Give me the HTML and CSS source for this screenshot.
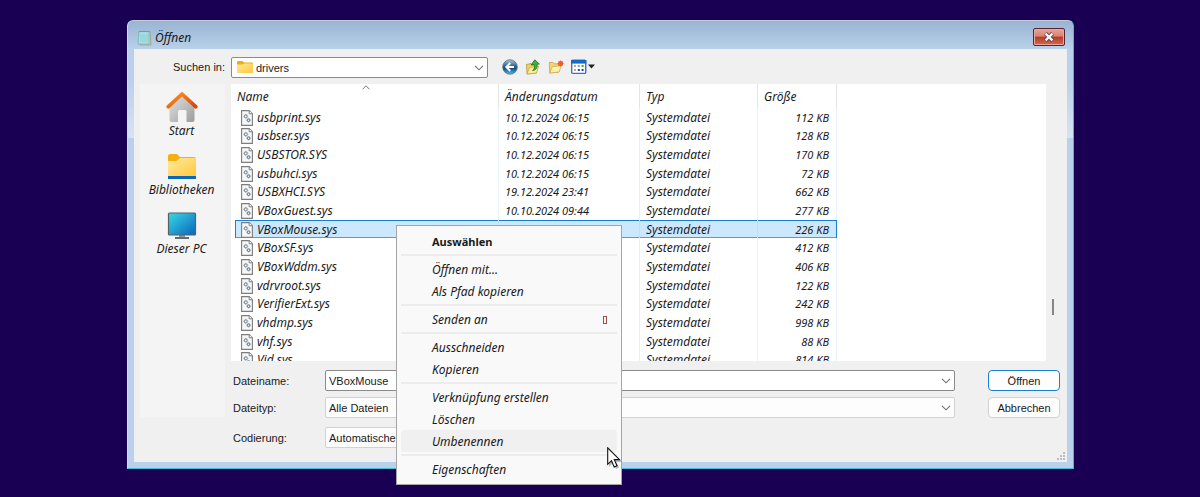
FILE: index.html
```
<!DOCTYPE html>
<html lang="de">
<head>
	<meta charset="utf-8">
	<title>Öffnen</title>
	<link rel="stylesheet" href="styles.css">
</head>
<body>

<!-- shared icons -->
<svg class="defs" width="0" height="0" aria-hidden="true">
	<defs>
		<linearGradient id="yellow" x1="0" y1="0" x2="1" y2="1">
			<stop offset="0" stop-color="#ffe9a0"/><stop offset="1" stop-color="#ffc93c"/>
		</linearGradient>
		<linearGradient id="roof" x1="0" y1="0" x2="1" y2="1">
			<stop offset="0" stop-color="#ff9a1a"/><stop offset="1" stop-color="#d8400e"/>
		</linearGradient>
		<linearGradient id="wall" x1="0" y1="0" x2="1" y2="1">
			<stop offset="0" stop-color="#e4e4e4"/><stop offset="1" stop-color="#9c9c9c"/>
		</linearGradient>
		<linearGradient id="screen" x1="0" y1="0" x2="1" y2="1">
			<stop offset="0" stop-color="#36dbe4"/><stop offset="1" stop-color="#0d63bd"/>
		</linearGradient>
		<linearGradient id="ball" x1="0" y1="0" x2="0" y2="1">
			<stop offset="0" stop-color="#b3c7d6"/><stop offset="0.45" stop-color="#2b628f"/><stop offset="0.6" stop-color="#1c4f7d"/><stop offset="1" stop-color="#45c6ef"/>
		</linearGradient>
		<symbol id="sys" viewBox="0 0 12 16">
			<path d="M.6.6h7.600l3.200 3.200v11.600H.6z" fill="#f8f8f8" stroke="#7d7d7d" stroke-width="1.1"/>
			<path d="M8.2.8v3h3" fill="#fff" stroke="#7d7d7d"/>
			<circle cx="4.8" cy="6.3" r="1.5" fill="none" stroke="#8a98a6" stroke-width="1.2"/>
			<circle cx="7.6" cy="10.2" r="1.3" fill="none" stroke="#7c8997" stroke-width="1.2"/>
			<path d="M4.800 3.800v1.200M4.800 7.600v1.200M2.300 6.300h1.200M6.100 6.300h1.200M7.600 7.900v1M7.600 11.500v1M5.300 10.200h1M8.900 10.200h1" stroke="#9aa5b0"/>
		</symbol>
		<symbol id="down" viewBox="0 0 10 6">
			<path d="M1 .8 5 4.8 9 .8" fill="none" stroke="#707070" stroke-width="1.1"/>
		</symbol>
	</defs>
</svg>

<main class="dialog">
	<header class="titlebar">
		<svg class="notepad" width="15" height="16" viewBox="0 0 15 16">
			<path d="M2 1.5h11l1 13.5H3z" fill="#d9cfa6" stroke="#8f8c75" stroke-width=".6"/>
			<path d="M2 1.5h10v12.6L1 14z" fill="#a5e0e6" stroke="#66a9b5" stroke-width=".6"/>
			<path d="M3 5h8M3 7h8M3 9h8M3 11h8" stroke="#78bfca" stroke-width=".5"/>
			<path d="M2.5 1.6h10" stroke="#5f7f8d" stroke-dasharray="1 1"/>
		</svg>
		<h1>Öffnen</h1>
		<button class="close" type="button" aria-label="Schließen">
			<svg width="12" height="10" viewBox="0 0 12 10"><path d="M2.5 1.5 9.5 8.5M9.5 1.5 2.5 8.5" stroke="#5d4350" stroke-width="4"/><path d="M2.6 1.6 9.4 8.4M9.4 1.6 2.6 8.4" stroke="#f4f4f4" stroke-width="2.3"/></svg>
		</button>
	</header>

	<form class="client">
		<label class="lookin-label" for="lookin">Suchen in:</label>
		<div class="lookin-row">
			<div class="combo lookin">
				<svg class="folder" width="16" height="14" viewBox="0 0 16 14">
					<path d="M0 2Q0 1 1 1h4.5L7 2.5h8q1 0 1 1V8H0z" fill="#f2ac0c"/>
					<path d="M0 4.6h5.6L7 3.5h9v8.7q0 .8-.8.8H.8Q0 13 0 12.2z" fill="url(#yellow)"/>
				</svg>
				<select id="lookin"><option>drivers</option></select>
				<svg class="arrow" width="10" height="6"><use href="#down"/></svg>
			</div>
			<div class="tools">
				<button type="button" aria-label="Zurück">
					<svg width="16" height="16" viewBox="0 0 16 16"><circle cx="8" cy="8" r="7.3" fill="url(#ball)" stroke="#456783" stroke-width=".7"/><path d="M8.3 4 4.3 8l4 4M4.6 8H12" fill="none" stroke="#fff" stroke-width="1.9"/></svg>
				</button>
				<button type="button" aria-label="Übergeordneter Ordner">
					<svg width="16" height="16" viewBox="0 0 16 16"><path d="M1.5 5.5 6 4.5l1 1.2h4.5V14L2 15z" fill="#f0d067" stroke="#b28d25" stroke-width=".7"/><path d="m2 15 2.5-6.5 9-1.5L11.5 14z" fill="#ffec9c" stroke="#c2a03a" stroke-width=".7"/><path d="M7.500 11.500c2-1 2.300-3 1.700-6L6 6l3.800-5.200L14.300 5l-2.200.3c.3 3.500-.8 5.700-4.600 6.200z" fill="#3ab53a" stroke="#16701d" stroke-width=".8"/></svg>
				</button>
				<button type="button" aria-label="Neuer Ordner">
					<svg width="16" height="16" viewBox="0 0 16 16"><path d="M1.3 3.5h4l1.200 1.300H11V13L1.700 14z" fill="#f3d574" stroke="#c09b36" stroke-width=".7"/><path d="m1.700 14 2.500-6.300 9.300-1L11 13z" fill="#ffefac" stroke="#c7a747" stroke-width=".7"/><circle cx="12.600" cy="4.500" r="2.100" fill="#f79a52" stroke="#e8542c"/><path d="M12.600 1.500v6M9.600 4.500h6M10.500 2.400l4.200 4.200M14.700 2.400l-4.200 4.200" stroke="#e8542c" stroke-width=".8"/></svg>
				</button>
				<button type="button" class="views" aria-label="Ansicht">
					<svg width="24" height="16" viewBox="0 0 24 16"><rect x=".7" y="1.2" width="14" height="13.2" rx="1" fill="#fff" stroke="#2e78ca" stroke-width="1.4"/><path d="M0 1h15.4v3.600H0z" fill="#1769c6"/><path d="M3 6h2v2H3zM3 10h2v2H3z" fill="#df9a78"/><path d="M6.800 6h2v2h-2z" fill="#68a4ed"/><path d="M6.800 10h2v2h-2zM10.600 10h2v2h-2z" fill="#214aa6"/><path d="M10.600 6h2v2h-2z" fill="#48a046"/><path d="M17 5.500h7L20.500 9.500z" fill="#222"/></svg>
				</button>
			</div>
		</div>

		<nav class="places">
			<a href="#start">
				<svg width="32" height="32" viewBox="0 0 32 32"><path d="M3.500 15 16 3.500 28.500 15v14q0 2-2 2H20.500V20.500q0-1.500-1.500-1.500h-5.500q-1.500 0-1.500 1.500V31H5.500q-2 0-2-2z" fill="url(#wall)"/><path d="M2.300 15.700 16 3 29.700 15.700" fill="none" stroke="url(#roof)" stroke-width="3.700" stroke-linecap="round" stroke-linejoin="round"/></svg>
				Start
			</a>
			<a href="#bibliotheken">
				<svg width="32" height="32" viewBox="0 0 32 32"><path d="M2 6q0-2 2-2h7l3 3h14q2 0 2 2v7H2z" fill="#f5b010"/><path d="M2 11h8.500L14 8h16v19H2z" fill="url(#yellow)"/><path d="M2 26h28v3H2z" fill="#0b67b7"/></svg>
				Bibliotheken
			</a>
			<a href="#pc">
				<svg width="32" height="32" viewBox="0 0 32 32"><path d="M13 26h6v4h-6z" fill="#8e9499"/><path d="M9 28h14v2H9z" fill="#636b71"/><rect x="2.500" y="4" width="27" height="22" rx="1" fill="url(#screen)" stroke="#596168" stroke-width="1.200"/></svg>
				Dieser PC
			</a>
		</nav>

		<div class="list">
			<svg class="sort" width="8" height="5" viewBox="0 0 8 5"><path d="M.5 4.3 4 .8l3.500 3.500" fill="none" stroke="#777"/></svg>
			<table>
				<thead>
					<tr><th class="name">Name</th><th class="date">Änderungsdatum</th><th class="type">Typ</th><th class="size">Größe</th></tr>
				</thead>
				<tbody>
					<tr><td><svg width="12" height="16"><use href="#sys"/></svg>usbprint.sys</td><td>10.12.2024 06:15</td><td>Systemdatei</td><td>112 KB</td></tr>
					<tr><td><svg width="12" height="16"><use href="#sys"/></svg>usbser.sys</td><td>10.12.2024 06:15</td><td>Systemdatei</td><td>128 KB</td></tr>
					<tr><td><svg width="12" height="16"><use href="#sys"/></svg>USBSTOR.SYS</td><td>10.12.2024 06:15</td><td>Systemdatei</td><td>170 KB</td></tr>
					<tr><td><svg width="12" height="16"><use href="#sys"/></svg>usbuhci.sys</td><td>10.12.2024 06:15</td><td>Systemdatei</td><td>72 KB</td></tr>
					<tr><td><svg width="12" height="16"><use href="#sys"/></svg>USBXHCI.SYS</td><td>19.12.2024 23:41</td><td>Systemdatei</td><td>662 KB</td></tr>
					<tr><td><svg width="12" height="16"><use href="#sys"/></svg>VBoxGuest.sys</td><td>10.10.2024 09:44</td><td>Systemdatei</td><td>277 KB</td></tr>
					<tr class="selected"><td><svg width="12" height="16"><use href="#sys"/></svg>VBoxMouse.sys</td><td></td><td>Systemdatei</td><td>226 KB</td></tr>
					<tr><td><svg width="12" height="16"><use href="#sys"/></svg>VBoxSF.sys</td><td></td><td>Systemdatei</td><td>412 KB</td></tr>
					<tr><td><svg width="12" height="16"><use href="#sys"/></svg>VBoxWddm.sys</td><td></td><td>Systemdatei</td><td>406 KB</td></tr>
					<tr><td><svg width="12" height="16"><use href="#sys"/></svg>vdrvroot.sys</td><td></td><td>Systemdatei</td><td>122 KB</td></tr>
					<tr><td><svg width="12" height="16"><use href="#sys"/></svg>VerifierExt.sys</td><td></td><td>Systemdatei</td><td>242 KB</td></tr>
					<tr><td><svg width="12" height="16"><use href="#sys"/></svg>vhdmp.sys</td><td></td><td>Systemdatei</td><td>998 KB</td></tr>
					<tr><td><svg width="12" height="16"><use href="#sys"/></svg>vhf.sys</td><td></td><td>Systemdatei</td><td>88 KB</td></tr>
					<tr><td><svg width="12" height="16"><use href="#sys"/></svg>Vid.sys</td><td></td><td>Systemdatei</td><td>814 KB</td></tr>
				</tbody>
			</table>
		</div>
		<div class="scrollbar"><span class="thumb"></span></div>

		<div class="fields">
			<label for="filename">Dateiname:</label>
			<div class="combo strong">
				<input id="filename" type="text" value="VBoxMouse">
				<svg class="arrow" width="10" height="6"><use href="#down"/></svg>
			</div>
			<button class="push primary" type="button">Öffnen</button>

			<label for="filetype">Dateityp:</label>
			<div class="combo">
				<select id="filetype"><option>Alle Dateien</option></select>
				<svg class="arrow" width="10" height="6"><use href="#down"/></svg>
			</div>
			<button class="push" type="button">Abbrechen</button>

			<label class="coding" for="encoding">Codierung:</label>
			<div class="combo coding short">
				<select id="encoding"><option>Automatische Erkennung</option></select>
			</div>
		</div>
		<svg class="grip" width="9" height="9" viewBox="0 0 9 9"><path d="M6 0h2v2H6zM3 3h2v2H3zM6 3h2v2H6zM0 6h2v2H0zM3 6h2v2H3zM6 6h2v2H6z" fill="#bdbdbd"/></svg>
	</form>

	<div class="menu" role="menu">
		<button type="button" role="menuitem" class="default">Auswählen</button>
		<hr>
		<button type="button" role="menuitem">Öffnen mit...</button>
		<button type="button" role="menuitem">Als Pfad kopieren</button>
		<hr>
		<button type="button" role="menuitem">Senden an<span class="submenu"></span></button>
		<hr>
		<button type="button" role="menuitem">Ausschneiden</button>
		<button type="button" role="menuitem">Kopieren</button>
		<hr>
		<button type="button" role="menuitem">Verknüpfung erstellen</button>
		<button type="button" role="menuitem">Löschen</button>
		<button type="button" role="menuitem" class="hover">Umbenennen</button>
		<hr>
		<button type="button" role="menuitem">Eigenschaften</button>
		<svg class="cursor" width="16" height="24" viewBox="0 0 16 24"><path d="M2 2v18l4-4 3 6 3-1.500-2.700-5.500H15z" fill="#000" opacity=".25"/><path d="M.7.8v16.500l3.800-3.600 2.700 6.300 2.800-1.200-2.700-6.200h5.200z" fill="#fff" stroke="#111" stroke-width="1.1"/></svg>
	</div>
</main>

</body>
</html>
```
FILE: styles.css
```
body {
	margin: 0;
	padding: 20px 126px 28px 127px;
	background: #190052;
	font-family: "Noto Sans", sans-serif;
	font-size: 12px;
	line-height: 16px;
	color: #1a1a1a;
}

button, input, select {
	box-sizing: border-box;
	margin: 0;
	font: inherit;
	color: inherit;
}

.defs {
	position: absolute;
}

.dialog {
	position: relative;
	padding: 0 6px 6px;
	border: 1px solid #43bed0;
	border-top-color: #c5cdd9;
	border-left-color: #cfe3f4;
	border-radius: 6px 6px 0 0;
	background: linear-gradient(#99b4d1, #b9d1ea 28px, #b9d1ea 60px, #d5e4f3 117px, #b9d1ea 117px);
}

.titlebar {
	display: flex;
	align-items: center;
	height: 28px;
	padding: 0 2px 0 3px;
}

.titlebar h1 {
	flex: 1;
	margin: 6px 0 0 3px;
	font-size: 12px;
	font-weight: normal;
	font-style: italic;
}

.notepad {
	margin-top: 5px;
}

.close {
	display: flex;
	align-items: center;
	justify-content: center;
	width: 32px;
	height: 18px;
	margin-top: 3px;
	padding: 0;
	border: 1px solid #5b2330;
	border-radius: 2px;
	background: linear-gradient(#e6a49a, #d98476 45%, #b83a22 50%, #cf6a52);
	box-shadow: inset 0 0 0 1px #e8a89c;
}

.client {
	display: grid;
	grid-template-columns: 84px 1fr 14px;
	position: relative;
	padding: 8px 7px 14px;
	background: #f0f0f0;
	font-family: "Liberation Sans", sans-serif;
	font-size: 11px;
}

/* top row */
.lookin-label {
	padding-top: 2px;
	text-align: right;
}

.lookin-row {
	display: flex;
	grid-column: 2 / 4;
	height: 27px;
	margin-left: 6px;
}

.combo {
	position: relative;
	height: 21px;
}

.combo select, .combo input {
	display: block;
	appearance: none;
	width: 100%;
	height: 100%;
	padding: 0 20px 0 3px;
	border: 1px solid #d2d2d2;
	border-radius: 2px;
	background: #fdfdfd;
	outline: none;
}

.combo.lookin {
	width: 257px;
}

.combo.lookin select, .combo.strong input {
	border-color: #8a8a8a;
	background: #fff;
}

.combo.lookin select {
	padding-left: 24px;
}

.arrow {
	position: absolute;
	right: 4px;
	top: 8px;
}

.folder {
	position: absolute;
	left: 6px;
	top: 3px;
}

.tools {
	display: flex;
	align-items: flex-start;
	gap: 7px;
	padding: 2px 0 0 14px;
}

.tools button {
	display: flex;
	padding: 0;
	border: 0;
	background: none;
}

/* places bar */
.places {
	grid-row: 2 / 4;
	height: 326px;
	padding: 7px 2px 0 0;
	margin-left: -1px;
	background: #f4f4f4;
}

.places a {
	display: flex;
	flex-direction: column;
	align-items: center;
	height: 59px;
	color: inherit;
	font: italic 12px/16px "Noto Sans", sans-serif;
	text-decoration: none;
}

/* file list */
.list {
	position: relative;
	height: 277px;
	margin-left: 6px;
	overflow: hidden;
	background: #fff;
	font: italic 12px/16px "Noto Sans", sans-serif;
}

.sort {
	position: absolute;
	left: 131px;
	top: 1px;
}

.list table {
	width: 602px;
	height: 285px;
	margin-left: 4px;
	table-layout: fixed;
	border-collapse: separate;
	border-spacing: 0;
}

.list th, .list td {
	box-sizing: border-box;
	padding: 1px 7px 0 6px;
	border-right: 1px solid #e9f2fb;
	text-align: left;
	font-weight: normal;
	white-space: nowrap;
}

.list th {
	height: 24px;
	border-right-color: #e5e5e5;
}

.list th.name {
	width: 264px;
	padding-left: 2px;
}

.list th.date {
	width: 141px;
}

.list th.type {
	width: 118px;
}

/* digits are set a little smaller than the names */
.list td:nth-child(2), .list td:last-child {
	font-size: 11px;
}

.list td:last-child {
	text-align: right;
}

.list td svg {
	margin-right: 4px;
	vertical-align: top;
}

.selected td {
	background: #cce8ff;
	border-color: #c0e0fa;
	box-shadow: inset 0 1px #1a7fd4, inset 0 -1px #4a9fe0;
}

.selected td:first-child {
	box-shadow: inset 1px 1px #1a7fd4, inset 0 -1px #4a9fe0;
}

.selected td:last-child {
	border-color: #1a7fd4;
}

.scrollbar {
	padding: 215px 0 0 6px;
}

.thumb {
	display: block;
	width: 2px;
	height: 16px;
	background: #868686;
}

/* bottom fields */
.fields {
	display: grid;
	grid-column: 2 / 4;
	grid-template-columns: 88px 1fr 72px;
	align-items: center;
	gap: 6px 0;
	padding: 9px 0 0 8px;
}

.fields .combo {
	margin: 0 33px 0 4px;
}

.fields .short {
	width: 240px;
}

.fields .coding {
	margin-top: 3px;
}

.push {
	height: 21px;
	padding: 0;
	border: 1px solid #d0d0d0;
	border-radius: 4px;
	background: #fdfdfd;
}

.push.primary {
	border-color: #1a7fd4;
}

.grip {
	position: absolute;
	right: 1px;
	bottom: 1px;
}

/* context menu */
.menu {
	position: absolute;
	left: 268px;
	top: 204px;
	width: 216px;
	padding: 4px;
	border: 1px solid #a5a5a5;
	background: #f9f9f9;
}

.menu button {
	display: flex;
	align-items: center;
	justify-content: space-between;
	width: 100%;
	height: 22px;
	padding: 1px 10px 0 31px;
	border: 0;
	border-radius: 3px;
	background: none;
	font-style: italic;
}

.menu .default {
	font-size: 11px;
	font-style: normal;
	font-weight: bold;
}

.menu .hover {
	background: #f0f0f0;
}

.menu hr {
	height: 2px;
	margin: 2px 0;
	border: 0;
	background: #ececec;
}

.submenu {
	width: 2px;
	height: 6px;
	border: 1px solid #a34a4a;
}

.cursor {
	position: absolute;
	left: 210px;
	top: 221px;
}
```
